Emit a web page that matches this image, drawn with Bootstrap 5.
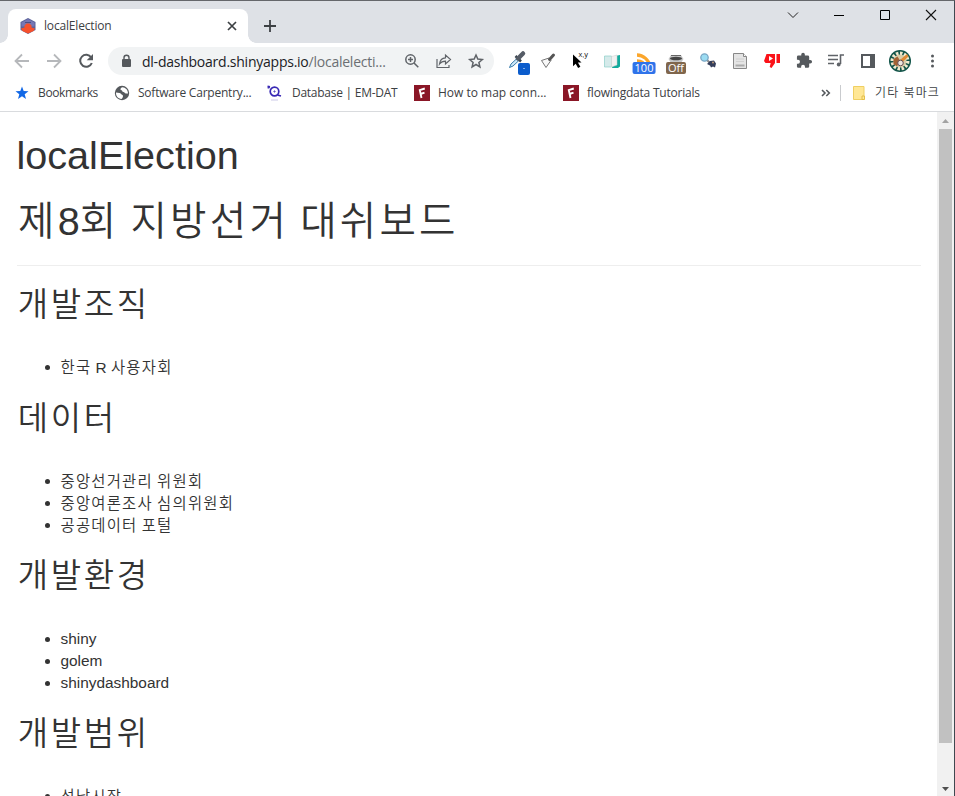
<!DOCTYPE html>
<html lang="ko">
<head>
<meta charset="utf-8">
<meta name="viewport" content="width=device-width, initial-scale=1">
<title>localElection</title>
<link href="https://cdn.jsdelivr.net/npm/bootstrap@5.3.0/dist/css/bootstrap.min.css" rel="stylesheet">
<style>
body{height:796px;font-family:"Open Sans","Noto Sans CJK KR",sans-serif;color:#3c4043}
svg{display:block;flex:none}
.window{height:796px;border-top:1px solid #65676b;border-right:1px solid #3f4850}
.tabstrip{height:42px;background:#dee1e6;padding-left:8px}
.page-tab{width:240px;height:34px;margin-top:8px;border-radius:8px 8px 0 0;background:#fff;padding:0 10px 0 12px;font-size:12px;position:relative}
.page-tab::before,.page-tab::after{content:"";position:absolute;bottom:0;width:8px;height:8px}
.page-tab::before{left:-8px;background:radial-gradient(circle at 0 0,#dee1e6 7.5px,#fff 8px)}
.page-tab::after{right:-8px;background:radial-gradient(circle at 100% 0,#dee1e6 7.5px,#fff 8px)}
.page-title{letter-spacing:-.17px}
.newtab{margin:18px 0 0 15px}
.winctl>*{width:46px;height:29px}
.toolbar{height:36px;padding-left:6px}
.slot{width:32px;height:32px;flex:none;position:relative}
.omni{width:386px;height:28px;margin:0 6px;border-radius:14px;background:#f1f3f4;padding-left:12px;font-size:14px;color:#202124}
.omni .host{width:253px;margin-left:10px;letter-spacing:-.24px}
.omni .path{color:#6b6f73}
.marks{height:33px;padding-bottom:5px;border-bottom:1px solid #d9dbde;font-size:12px;padding-left:14px;box-sizing:border-box}
.mk{flex:none;margin-left:8px;letter-spacing:-.22px}
.mk-1{width:76px;letter-spacing:-.36px}
.mk-2{width:129px}
.mk-3{width:122px;margin-left:9px;letter-spacing:-.26px}
.mk-4{width:125px;letter-spacing:0}
.mk-sep{width:1px;height:16px;background:#c9cbce;margin:0 11px 0 9px}
.mk-other{margin:0 14px 0 9px;font-weight:350;letter-spacing:1.1px}
.badge-num{position:absolute;left:50%;top:17px;transform:translateX(-50%);height:12px;border-radius:2px;color:#fff;font-size:11px;line-height:12px;padding:0 2px}
.num-blue{background:#2f73ea}
.num-brown{background:#80664c}
.viewport{height:684px;overflow:hidden}
.doc{font-family:"Liberation Sans","Noto Sans CJK KR",sans-serif;color:#333;font-size:15.4px;line-height:22px;padding:22px 16px 0 16.5px;overflow:hidden}
.doc h1{font-size:39.6px;line-height:43.56px;height:43.56px;margin:0 0 22px;font-weight:400;white-space:nowrap}
.doc hr{margin:0 0 22px;border-top:1px solid #eee;opacity:1}
.doc h2{font-size:33px;line-height:34.6px;height:36.3px;margin:0 0 32px}
.doc ul{margin:0 0 23.4px;padding-left:44px}
.doc li{height:22px}
.ko,.doc h1.ko,.doc h2.ko{font-weight:350;letter-spacing:.08em;word-spacing:-.08em}
.doc h1.ko{line-height:42px;padding-left:1.5px;letter-spacing:.082em}
.doc h2.ko{padding-left:1.3px}
.doc li .ko{vertical-align:-1px;line-height:20px}
.ko b{font-weight:400;letter-spacing:0}
.sbar{width:17px;background:#f1f1f1;padding:0 2px}
.thumb{height:614px;background:#c1c1c1}
</style>
<script src="https://cdn.jsdelivr.net/npm/bootstrap@5.3.0/dist/js/bootstrap.bundle.min.js"></script>
</head>
<body class="overflow-hidden bg-white">
<div class="window d-flex flex-column">
 <header>
  <div class="tabstrip d-flex">
   <div class="page-tab d-flex align-items-center">
    <svg width="16" height="16" viewBox="0 0 16 16"><path d="M8 0l7.500 4v8L8 16 .5 12V4z" fill="#5b6299"/><path d="M8 1l6.500 3.500v4H1.500v-4z" fill="#7577b5"/><path d="M5 4.500h6" stroke="#4c507f"/><path d="M1 10.500l3.500-1V7.500L6.500 5.500h3l2 2v2l3.500 1-1.500 2.500L8 15.500 2.500 13z" fill="#f6512c"/></svg>
    <span class="ms-2 page-title">localElection</span>
    <svg class="ms-auto" width="12" height="12" viewBox="0 0 12 12" stroke="#3c4043" stroke-width="1.700"><path d="M2 2l8 8M10 2l-8 8"/></svg>
   </div>
   <svg class="newtab" width="14" height="14" viewBox="0 0 14 14" stroke="#3c4043" stroke-width="1.800"><path d="M7 1v12M1 7h12"/></svg>
   <div class="winctl d-flex ms-auto">
    <svg viewBox="0 0 46 29" fill="none" stroke="#222"><path d="M18 11.500l5 5 5-5"/></svg>
    <svg viewBox="0 0 46 29" stroke="#000"><path d="M18 14.500h10"/></svg>
    <svg viewBox="0 0 46 29" fill="none" stroke="#000"><path d="M18.500 9.500h9v9h-9z"/></svg>
    <svg viewBox="0 0 46 29" fill="none" stroke="#111" stroke-width="1.100"><path d="M18 9l10 10M28 9l-10 10"/></svg>
   </div>
  </div>
  <div class="toolbar d-flex align-items-center">
   <svg class="slot" viewBox="0 0 32 32" fill="none" stroke="#b6b8bb" stroke-width="1.800"><path d="M23 16H10M16 9.500L9.500 16l6.500 6.500"/></svg>
   <svg class="slot" viewBox="0 0 32 32" fill="none" stroke="#b6b8bb" stroke-width="1.800"><path d="M9 16h13M16 9.500l6.500 6.500-6.500 6.500"/></svg>
   <svg class="slot" viewBox="0 0 32 32"><path d="M21.200 12.500A6 6 0 1 0 21.800 18" fill="none" stroke="#55595d" stroke-width="2"/><path d="M23 9v6.300h-6.300z" fill="#55595d"/></svg>
   <div class="omni d-flex align-items-center">
    <svg width="12" height="14" viewBox="0 0 12 14"><rect x="2" y="5" width="9" height="8" rx="1" fill="#55595d"/><path d="M4 5.500V3.700a2.500 2.500 0 0 1 5 0v1.800" fill="none" stroke="#55595d" stroke-width="1.400"/></svg>
    <span class="host text-nowrap">dl-dashboard.shinyapps.io<span class="path">/localelecti...</span></span>
    <svg width="32" height="28" viewBox="0 0 32 28" fill="none" stroke="#5f6368" stroke-width="1.500"><circle cx="15.500" cy="12.500" r="4.700"/><path d="M19 16l4.300 4.300M13 12.500h5M15.500 10v5"/></svg>
    <svg width="32" height="28" viewBox="0 0 32 28" fill="none" stroke="#5f6368" stroke-width="1.200"><path d="M10 12v8.500h12V18M12.500 17c.5-4 3-6 6-6.200V8l5 4.500-5 4.500v-2.800c-2.500 0-4.500.8-6 2.800z"/></svg>
    <svg width="32" height="28" viewBox="0 0 32 28" fill="none" stroke="#5f6368" stroke-width="1.500"><path d="M17 8l1.800 4.100 4.500.4-3.400 3 1 4.400-3.900-2.400-3.900 2.400 1-4.400-3.400-3 4.500-.4z"/></svg>
   </div>
   <div class="slot"><svg width="32" height="32" viewBox="0 0 32 32"><path d="M9.500 22.500l1.500-3.500 7-6.500 2 2-7 6.500z" fill="#cce7f8" stroke="#397cab"/><path d="M15.500 11l5.500 5.500" stroke="#3b4650" stroke-width="2.500"/><path d="M18 13.500l5-5" stroke="#555c66" stroke-width="4.500" stroke-linecap="round"/><rect x="18" y="18" width="12" height="12" rx="2" fill="#0b5ccc"/><path d="M23.500 23.500h1" stroke="#fff"/></svg></div>
   <svg class="slot" viewBox="0 0 32 32" fill="none"><path d="M9.500 15.500l7.500-2.500 2 2.300-5 7.200-4.500-7z" stroke="#777" fill="#f8f8f8"/><path d="M17.500 14.500l4-4.500" stroke="#555" stroke-width="3" stroke-linecap="round"/></svg>
   <svg class="slot" viewBox="0 0 32 32"><path d="M9 9.500v11.700l2.700-2.500 2.400 4.300 2.300-1.300-2.500-4.200h3.600z" fill="#000"/><text x="14.500" y="12" font-size="7.500" font-family="Liberation Sans" fill="#222">x,y</text></svg>
   <svg class="slot" viewBox="0 0 32 32"><path d="M19 11l5-1v11.500l-2 1.500h-6z" fill="#12aa9c"/><path d="M8.500 11h7v11h-7z" fill="#d5eaea" stroke="#8dcfc9" stroke-width=".7"/><path d="M15.500 11.500l5.500-1.500v10l-5.500 2z" fill="#f1f1f1" stroke="#ccc" stroke-width=".5"/></svg>
   <div class="slot"><svg width="32" height="32" viewBox="0 0 32 32" fill="none" stroke="#fba62b" stroke-width="3.300"><path d="M9 10c6 0 12.500 5 13 12M9 16c4 0 7 2 7.500 6"/></svg><span class="badge-num num-blue">100</span></div>
   <div class="slot"><svg width="32" height="32" viewBox="0 0 32 32"><path d="M11 10h10l2.500 4-2.500 4H11l-2.500-4z" fill="#c6c6c6"/><path d="M11 10.500h10" stroke="#666"/><ellipse cx="16" cy="13.500" rx="6" ry="1.800" fill="#444"/></svg><span class="badge-num num-brown">Off</span></div>
   <svg class="slot" viewBox="0 0 32 32"><path d="M15 15l4 4" stroke="#888" stroke-width="2"/><circle cx="12.500" cy="12.500" r="3.700" fill="#9bdcf2" stroke="#7aa6c4" stroke-width="1.300"/><path d="M15 19l3-3 4-.5 2 3-1 4-2-1-2 1-1-2z" fill="#343d5a"/><circle cx="21" cy="17.500" r="1" fill="#c09b78"/></svg>
   <svg class="slot" viewBox="0 0 32 32"><path d="M9.500 8.500h10l3 3v12h-13z" fill="#e4e4e4" stroke="#888"/><path d="M19.500 8.500v3h3" fill="#fff" stroke="#888"/><path d="M12 14h8M12 16.500h8" stroke="#d0d0d0"/><path d="M11.500 20.500h9" stroke="#aaa" stroke-width="2"/></svg>
   <svg class="slot" viewBox="0 0 32 32"><path d="M10.500 9H19v9l-3.500 5-1.800-1 1-4H9.500L8 16z" fill="#fb1219"/><path d="M20.500 9H24v9h-3.500z" fill="#fb1219"/><path d="M13 11l4 2.500-4 2.500z" fill="#fff"/></svg>
   <svg class="slot" viewBox="0 0 32 32"><path transform="translate(7.500 7) scale(.72)" d="M20.500 11H19V7a2 2 0 0 0-2-2h-4V3.500a2.500 2.500 0 0 0-5 0V5H4a2 2 0 0 0-2 2v3.800h1.500a2.700 2.700 0 0 1 0 5.400H2V20a2 2 0 0 0 2 2h3.800v-1.500a2.700 2.700 0 0 1 5.400 0V22H17a2 2 0 0 0 2-2v-4h1.500a2.500 2.500 0 0 0 0-5z" fill="#55595d"/></svg>
   <svg class="slot" viewBox="0 0 32 32" fill="none" stroke="#5f6368" stroke-width="1.600"><path d="M8 10.500h10M8 14.500h10M8 18.500h6M20.500 19v-9H24"/><circle cx="18.700" cy="19.500" r="1.900" fill="#5f6368" stroke="none"/></svg>
   <svg class="slot" viewBox="0 0 32 32"><path d="M10 10h12v12H10z" fill="#fff" stroke="#55595d" stroke-width="2"/><path d="M18 9h5v14h-5z" fill="#55595d"/></svg>
   <svg class="slot" viewBox="0 0 32 32"><circle cx="16" cy="16" r="11" fill="#125449"/><circle cx="16" cy="16" r="7.500" fill="none" stroke="#f2ead0" stroke-width="4" stroke-dasharray="2.400 1.500"/><circle cx="16" cy="16" r="6.500" fill="#d9cda9"/><path d="M9.500 14l4-2.500 2.500 4-3 6-3.500-2.500z" fill="#a36335"/><path d="M16 15l7-6 1.500 2.500-6.500 6z" fill="#e08a34"/><circle cx="16.500" cy="18" r="2.800" fill="#eee7df" stroke="#654c54"/></svg>
   <svg class="slot" viewBox="0 0 32 32" fill="#55595d"><circle cx="16.500" cy="11" r="1.500"/><circle cx="16.500" cy="16" r="1.500"/><circle cx="16.500" cy="21" r="1.500"/></svg>
  </div>
  <div class="marks d-flex align-items-center text-nowrap">
   <svg width="16" height="16" viewBox="0 0 16 16" fill="#1268e6"><path d="M8 1.500l1.700 4.600 4.800.2-3.800 3 1.300 4.800-4-2.800-4 2.800 1.300-4.800-3.800-3 4.800-.2z"/></svg>
   <span class="mk mk-1">Bookmarks</span>
   <svg width="16" height="16" viewBox="0 0 16 16"><circle cx="8" cy="8" r="7.200" fill="#55595d"/><path d="M2 7.500l3.500.5c1.500.3 1.500 1.500 3 2 1 .4.500 3-1 4C4 13.500 1.800 11 2 7.500zM8.500 2.300C6 3 6 5 7.500 5.300c1 .2.500 1.700 2 1.700 1.200 0 1 1.500 2.500 1.500h2C14 5 11.500 2.500 8.500 2.300z" fill="#fff"/></svg>
   <span class="mk mk-2">Software Carpentry...</span>
   <svg width="16" height="16" viewBox="0 0 16 16" fill="none" stroke="#3929b4" stroke-width="1.700"><circle cx="7.500" cy="6.500" r="4.300"/><path d="M10.500 10l3.500 1M.5 1.500l2.500.5M1.500 1v2.500" stroke-width="1.800"/><circle cx="7.500" cy="6.500" r=".6" stroke-width="1"/><path d="M4 15h7" stroke="#ccc9e8" stroke-width="1"/></svg>
   <span class="mk mk-3">Database | EM-DAT</span>
   <svg width="16" height="16" viewBox="0 0 16 16"><path d="M0 0h16v16H0z" fill="#8a1626"/><path d="M7.500 13L5.800 5.200l5-1.700M6.500 9l4-1.400" fill="none" stroke="#fff" stroke-width="1.900"/></svg>
   <span class="mk mk-4">How to map conn...</span>
   <svg width="16" height="16" viewBox="0 0 16 16"><path d="M0 0h16v16H0z" fill="#8a1626"/><path d="M7.500 13L5.800 5.200l5-1.700M6.500 9l4-1.400" fill="none" stroke="#fff" stroke-width="1.900"/></svg>
   <span class="mk">flowingdata Tutorials</span>
   <svg class="ms-auto" width="10" height="10" viewBox="0 0 10 10" fill="none" stroke="#55595d" stroke-width="1.600"><path d="M1 2l3 3-3 3M5.300 2l3 3-3 3"/></svg>
   <span class="mk-sep"></span>
   <svg width="14" height="16" viewBox="0 0 14 16"><path d="M1.500 1.500h10.500v13h-10.500z" fill="#ffe795" stroke="#efcf62"/><path d="M10 11h2.500v3.500H10z" fill="#ffe795" stroke="#e4bf48"/></svg>
   <span class="mk-other">기타 북마크</span>
  </div>
 </header>
 <div class="viewport d-flex">
  <main class="doc flex-grow-1">
   <h1>localElection</h1>
   <h1 class="ko">제<b>8</b>회 지방선거 대쉬보드</h1>
   <hr>
   <h2 class="ko">개발조직</h2>
   <ul><li><span class="ko">한국 <b>R</b> 사용자회</span></li></ul>
   <h2 class="ko">데이터</h2>
   <ul><li><span class="ko">중앙선거관리 위원회</span></li><li><span class="ko">중앙여론조사 심의위원회</span></li><li><span class="ko">공공데이터 포털</span></li></ul>
   <h2 class="ko">개발환경</h2>
   <ul><li>shiny</li><li>golem</li><li>shinydashboard</li></ul>
   <h2 class="ko">개발범위</h2>
   <ul><li><span class="ko">성남시장</span></li></ul>
  </main>
  <div class="sbar d-flex flex-column">
   <svg width="13" height="17" viewBox="0 0 13 17"><path d="M3 11h7L6.500 7z" fill="#a3a3a3"/></svg>
   <div class="thumb"></div>
   <svg class="mt-auto" width="13" height="17" viewBox="0 0 13 17"><path d="M3 8h7l-3.500 4z" fill="#505050"/></svg>
  </div>
 </div>
</div>
</body>
</html>
